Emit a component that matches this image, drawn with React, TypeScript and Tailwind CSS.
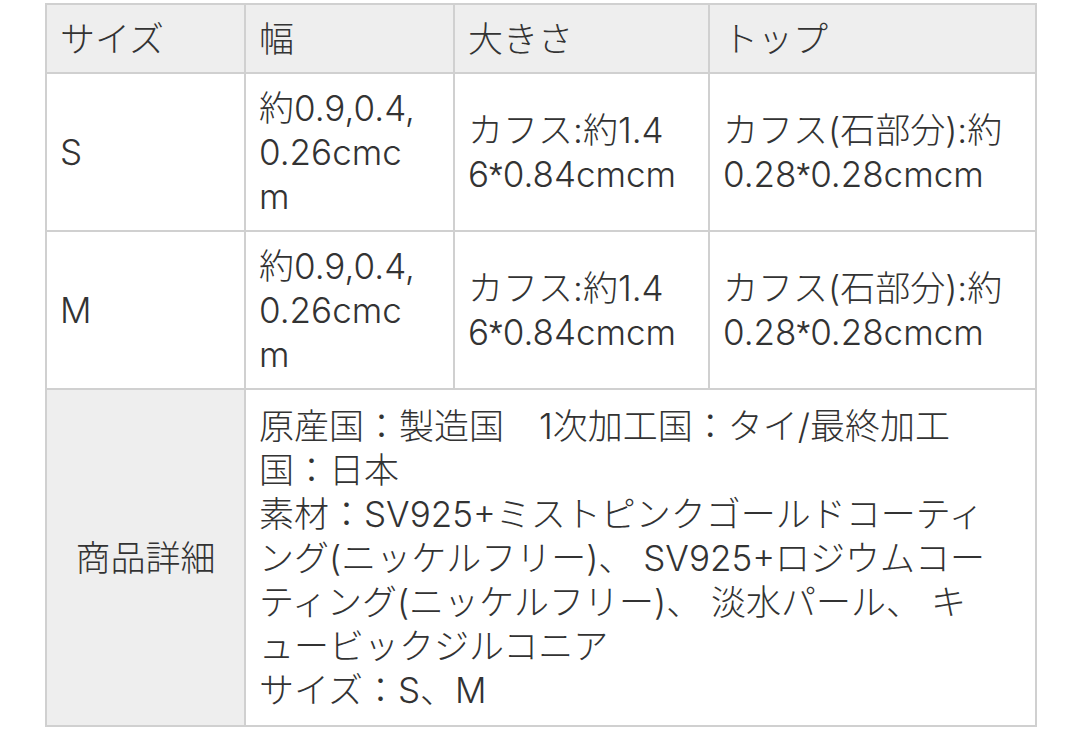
import React from "react";

const cell = "border-2 border-[#d0d0d0] px-[13px] align-middle";

type Row = { size: string; width: string[]; big: string[]; top: string[] };

const rows: Row[] = [
  {
    size: "S",
    width: ["約0.9,0.4,", "0.26cmc", "m"],
    big: ["カフス:約1.4", "6*0.84cmcm"],
    top: ["カフス(石部分):約", "0.28*0.28cmcm"],
  },
  {
    size: "M",
    width: ["約0.9,0.4,", "0.26cmc", "m"],
    big: ["カフス:約1.4", "6*0.84cmcm"],
    top: ["カフス(石部分):約", "0.28*0.28cmcm"],
  },
];

const detail = [
  "原産国：製造国　1次加工国：タイ/最終加工",
  "国：日本",
  "素材：SV925+ミストピンクゴールドコーティ",
  "ング(ニッケルフリー)、 SV925+ロジウムコー",
  "ティング(ニッケルフリー)、 淡水パール、 キ",
  "ュービックジルコニア",
  "サイズ：S、M",
];

// asterisk sits high in the reference, Inter centres it
function Text({ t }: { t: string }) {
  const parts = t.split("*");
  return (
    <>
      {parts.map((p, i) => (
        <React.Fragment key={i}>
          {i > 0 && <span className="font-['Liberation_Sans'] font-normal">*</span>}
          {p}
        </React.Fragment>
      ))}
    </>
  );
}

function Lines({ items }: { items: string[] }) {
  return (
    <>
      {items.map((t, i) => (
        <div key={i} className="whitespace-pre">
          <Text t={t} />
        </div>
      ))}
    </>
  );
}

export default function App() {
  return (
    <div className="min-h-[751px] bg-white pl-[45px] pt-[3px] font-['Inter','Noto_Sans_CJK_JP',sans-serif] text-[35px] leading-[44px] font-light text-[#333]">
      <table className="w-[990px] table-fixed border-collapse">
        <colgroup>
          <col className="w-[199px]" />
          <col className="w-[209px]" />
          <col className="w-[255px]" />
          <col className="w-[327px]" />
        </colgroup>
        <tbody>
          <tr className="h-[69px] bg-[#eeeeee]">
            <td className={cell}>サイズ</td>
            <td className={cell}>幅</td>
            <td className={cell}>大きさ</td>
            <td className={cell}>トップ</td>
          </tr>
          {rows.map((r) => (
            <tr key={r.size} className="h-[158px]">
              <td className={cell}>{r.size}</td>
              <td className={cell}>
                <Lines items={r.width} />
              </td>
              <td className={cell}>
                <Lines items={r.big} />
              </td>
              <td className={cell}>
                <Lines items={r.top} />
              </td>
            </tr>
          ))}
          <tr className="h-[337px]">
            <td className={`${cell} bg-[#eeeeee] text-center`}>商品詳細</td>
            <td className={cell} colSpan={3}>
              <Lines items={detail} />
            </td>
          </tr>
        </tbody>
      </table>
    </div>
  );
}
